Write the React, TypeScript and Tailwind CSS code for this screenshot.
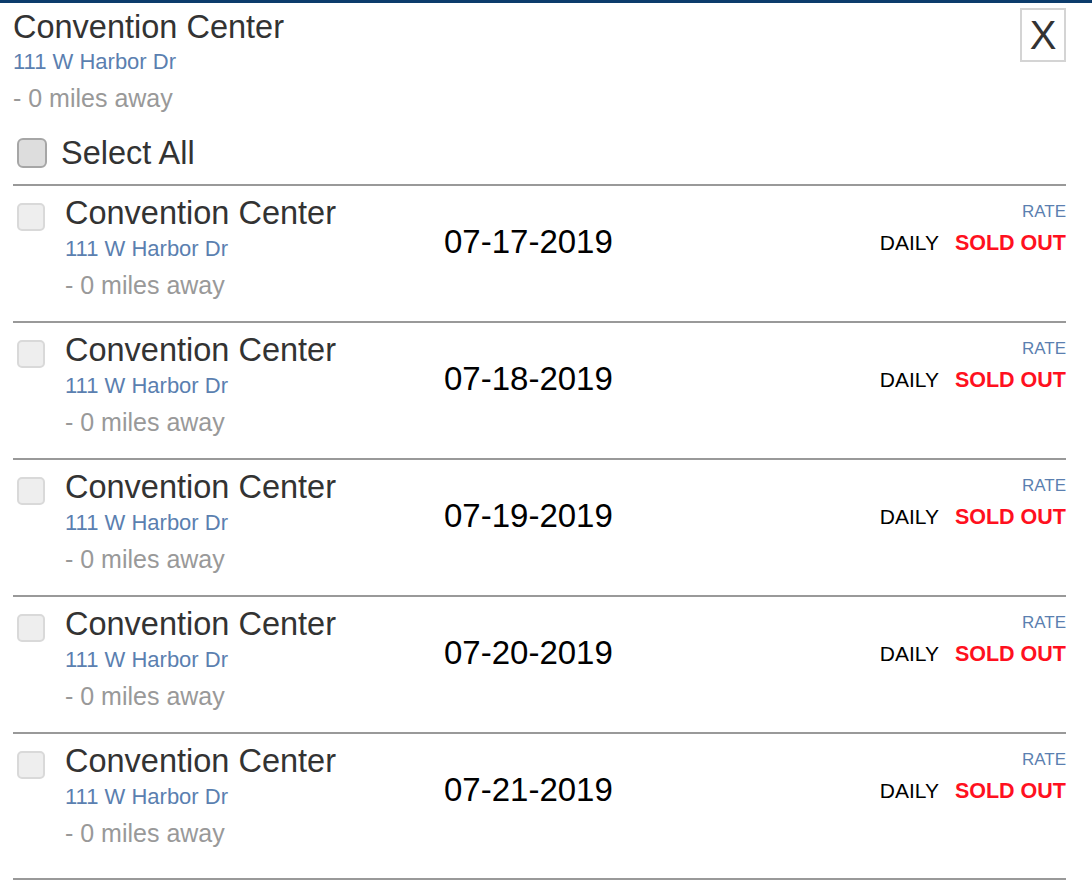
import React from "react";

const dates = ["07-17-2019", "07-18-2019", "07-19-2019", "07-20-2019", "07-21-2019"];

function Row({ date, last }: { date: string; last: boolean }) {
  return (
    <div className={`flex border-b-2 border-[#999999] ${last ? "h-[146px]" : "h-[137px]"}`}>
      <div className="flex w-[431px] shrink-0">
        <div className="ml-[4px] mt-[17px] h-[28px] w-[28px] shrink-0 rounded-[5px] border-2 border-[#d9d9d9] bg-[#eeeeee]" />
        <div className="ml-[20px] mt-[9px] flex flex-col">
          <div className="text-[32.5px] leading-[36px] text-[#333333]">Convention Center</div>
          <div className="text-[22px] leading-[36px] text-[#5b7fb0]">111 W Harbor Dr</div>
          <div className="text-[25px] leading-[36px] text-[#999999]">- 0 miles away</div>
        </div>
      </div>
      <div className="mt-[38px] text-[33px] leading-[36px] text-black">{date}</div>
      <div className="ml-auto mt-[16px] flex flex-col items-end">
        <div className="text-[17px] leading-[20px] text-[#5b7fb0]">RATE</div>
        <div className="mt-[9px] flex gap-[16px] leading-[24px]">
          <span className="text-[21px] text-black">DAILY</span>
          <span className="text-[21.5px] font-bold text-[#ff1020]">SOLD OUT</span>
        </div>
      </div>
    </div>
  );
}

export default function App() {
  return (
    <div className="min-h-[882px] w-[1092px] bg-white font-['Liberation_Sans',Arial,sans-serif]">
      <div className="h-[3px] bg-[#0c3c6c]" />
      <div className="pl-[13px] pr-[26px]">
        <div className="flex">
          <div className="flex flex-col pt-[6px]">
            <div className="text-[32.5px] leading-[36px] text-[#333333]">Convention Center</div>
            <div className="text-[22px] leading-[34px] text-[#5b7fb0]">111 W Harbor Dr</div>
            <div className="text-[25px] leading-[38px] text-[#999999]">- 0 miles away</div>
          </div>
          <div className="ml-auto mt-[5px] flex h-[54px] w-[46px] items-center justify-center border-2 border-[#d4d4d4] text-[40px] leading-none text-[#333333]">
            X
          </div>
        </div>
        <div className="mt-[12px] flex h-[48px] items-center">
          <div className="ml-[4px] h-[30px] w-[30px] rounded-[6px] border-2 border-[#a6a6a6] bg-[#dddddd]" />
          <span className="ml-[14px] text-[32.5px] leading-[36px] text-[#333333]">Select All</span>
        </div>
        <div className="mt-[7px] h-[2px] bg-[#999999]" />
        {dates.map((d, i) => (
          <Row key={d} date={d} last={i === dates.length - 1} />
        ))}
      </div>
    </div>
  );
}
